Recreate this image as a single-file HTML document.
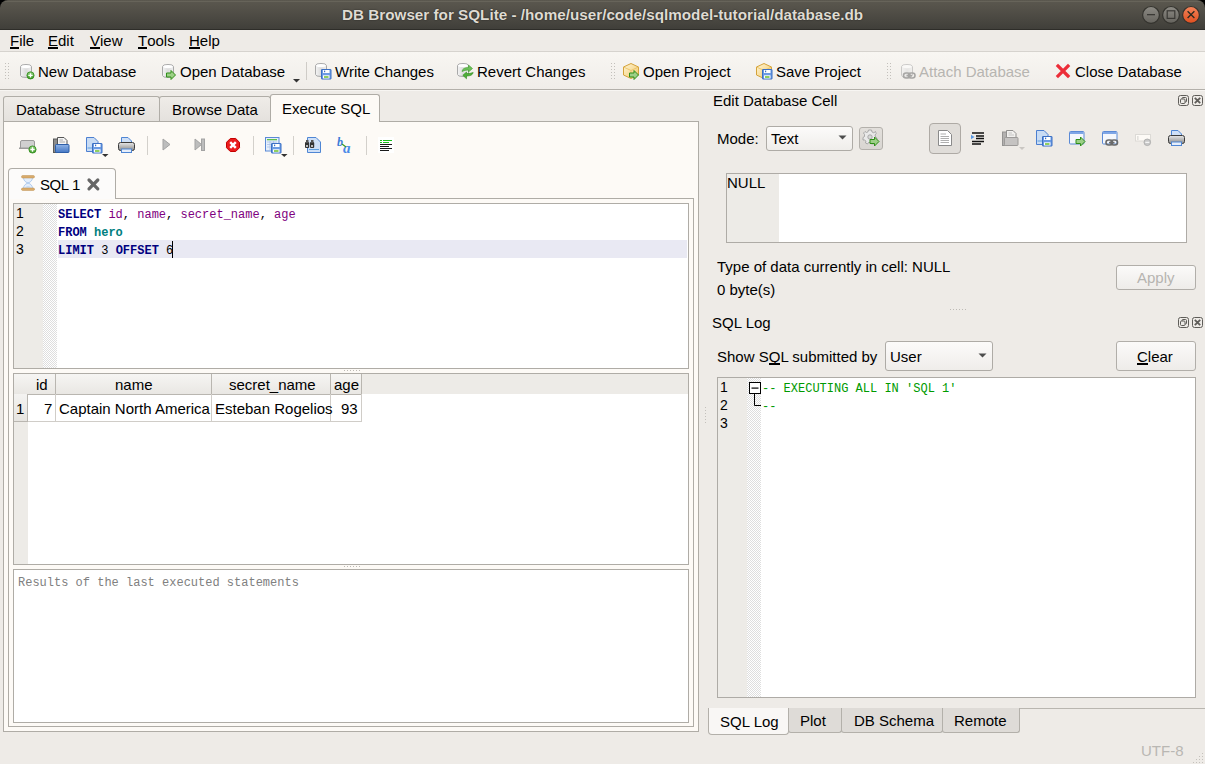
<!DOCTYPE html>
<html><head><meta charset="utf-8"><style>
*{margin:0;padding:0;box-sizing:border-box}
html,body{width:1205px;height:764px;overflow:hidden;background:#eeebe7;font-family:"Liberation Sans",sans-serif;font-size:15px;color:#000}
.a{position:absolute}
.t{position:absolute;white-space:nowrap;line-height:17px}
.m{position:absolute;white-space:nowrap;font-family:"Liberation Mono",monospace;font-size:12px;line-height:18px}
.ln{position:absolute;white-space:nowrap;font-size:14px;line-height:18px}
svg{position:absolute;overflow:visible}
u{text-decoration:none;position:relative}
u:after{content:"";position:absolute;left:0;right:0;bottom:0px;height:2px;background:currentColor}
.grip{position:absolute;background-image:linear-gradient(#c6c3be,#c6c3be);background-size:1px 1px}
</style></head><body>
<svg width="0" height="0" style="position:absolute">
<defs>
 <linearGradient id="gCyl" x1="0" x2="1" y1="0" y2="0">
  <stop offset="0" stop-color="#f4f4f4"/><stop offset="0.5" stop-color="#dcdcdc"/><stop offset="1" stop-color="#efefef"/>
 </linearGradient>
 <linearGradient id="gGreen" x1="0" x2="0" y1="0" y2="1">
  <stop offset="0" stop-color="#8fd07a"/><stop offset="1" stop-color="#3a9a22"/>
 </linearGradient>
 <linearGradient id="gBlue" x1="0" x2="0" y1="0" y2="1">
  <stop offset="0" stop-color="#8fb3e6"/><stop offset="1" stop-color="#4577c4"/>
 </linearGradient>
 <linearGradient id="gBox" x1="0" x2="1" y1="0" y2="1">
  <stop offset="0" stop-color="#fff6d6"/><stop offset="1" stop-color="#f2c666"/>
 </linearGradient>
 <linearGradient id="gPrint" x1="0" x2="0" y1="0" y2="1">
  <stop offset="0" stop-color="#e8e8e8"/><stop offset="1" stop-color="#8a8a8a"/>
 </linearGradient>
 <g id="cyl">
  <path d="M0.5,2.5 Q0.5,0.5 6,0.5 Q11.5,0.5 11.5,2.5 L11.5,11.5 Q11.5,13.5 6,13.5 Q0.5,13.5 0.5,11.5 Z" fill="url(#gCyl)" stroke="#a9a9a9"/>
  <ellipse cx="6" cy="2.6" rx="4.6" ry="1.6" fill="#fff"/>
 </g>
 <g id="floppy">
  <rect x="0.5" y="0.5" width="9.5" height="9.5" rx="0.3" fill="#6b9be4" stroke="#3b6fc4"/>
  <rect x="2" y="1" width="6.5" height="3" fill="#fff"/>
  <rect x="3" y="1.6" width="1.2" height="1.6" fill="#3b6fc4"/>
  <rect x="2" y="6.3" width="6.5" height="3.2" fill="#fff"/>
  <rect x="3" y="7.2" width="4.5" height="1.6" fill="#76c43a"/>
 </g>
 <g id="arrowG">
  <path d="M0.5,3 L5,3 L5,0.5 L9.5,5 L5,9.5 L5,7 L0.5,7 Z" fill="#9ccf86" stroke="#2f8f17" stroke-width="1"/>
 </g>
 <g id="box">
  <path d="M8,0.5 L15.5,4 L15.5,12 L8,15.5 L0.5,12 L0.5,4 Z" fill="url(#gBox)" stroke="#d4a23a"/>
  <path d="M0.5,4 L8,7.5 L15.5,4 M8,7.5 L8,15.5" fill="none" stroke="#e8bf60" stroke-width="0.8"/>
 </g>
 <g id="chain">
  <rect x="0.5" y="1" width="6.5" height="5" rx="2.5" fill="none" stroke="#6a6a6a" stroke-width="1.6"/>
  <rect x="5.5" y="1" width="6.5" height="5" rx="2.5" fill="none" stroke="#6a6a6a" stroke-width="1.6"/>
  <rect x="3.5" y="2.8" width="5.5" height="1.6" fill="#6a6a6a"/>
 </g>
</defs>
</svg>
<div class="a" style="left:0;top:0;width:1205px;height:10px;background:#000"></div>
<div class="a" style="left:0;top:0;width:1205px;height:30px;background:linear-gradient(#5b584f 0,#55524a 25%,#3f3e39 100%);border-radius:8px 8px 0 0;box-shadow:inset 0 -1px 0 #2e2d29"></div>
<div class="a" style="left:5px;top:1px;width:1195px;height:1px;background:#67645a"></div>
<span class="t" style="left:342px;top:6px;color:#dfdbd2;font-weight:bold;font-size:15.25px;text-shadow:0 0 1.5px rgba(0,0,0,.7)">DB Browser for SQLite - /home/user/code/sqlmodel-tutorial/database.db</span>
<svg width="0" height="0" style="position:absolute"><defs>
<linearGradient id="wbG" x1="0" x2="0" y1="0" y2="1"><stop offset="0" stop-color="#8c8a84"/><stop offset="1" stop-color="#65635d"/></linearGradient>
<linearGradient id="wbR" x1="0" x2="0" y1="0" y2="1"><stop offset="0" stop-color="#f5845a"/><stop offset="1" stop-color="#df4f1f"/></linearGradient>
</defs></svg>
<svg style="left:1141px;top:4px" width="20" height="21" viewBox="0 0 20 21"><circle cx="10" cy="10.9" r="8.4" fill="url(#wbG)" stroke="#34332e" stroke-width="1.2"/><rect x="6" y="10" width="8" height="1.3" fill="#3a3935"/></svg>
<svg style="left:1161px;top:4px" width="20" height="21" viewBox="0 0 20 21"><circle cx="10" cy="10.9" r="8.4" fill="url(#wbG)" stroke="#34332e" stroke-width="1.2"/><rect x="6.2" y="6.8" width="7.6" height="7.6" fill="none" stroke="#3a3935" stroke-width="1.2"/></svg>
<svg style="left:1181px;top:4px" width="20" height="21" viewBox="0 0 20 21"><circle cx="10" cy="10.9" r="8.4" fill="url(#wbR)" stroke="#34332e" stroke-width="1.2"/><path d="M6.6,7.2 L13.4,14 M13.4,7.2 L6.6,14" stroke="#2a2a20" stroke-width="1.3"/></svg>
<div class="a" style="left:0;top:30px;width:1205px;height:22px;background:#eeebe7;border-bottom:1px solid #d6d3ce"></div>
<span class="t" style="left:10px;top:32px;"><u>F</u>ile</span>
<span class="t" style="left:48px;top:32px;"><u>E</u>dit</span>
<span class="t" style="left:90px;top:32px;"><u>V</u>iew</span>
<span class="t" style="left:138px;top:32px;"><u>T</u>ools</span>
<span class="t" style="left:189px;top:32px;"><u>H</u>elp</span>
<div class="a" style="left:0;top:52px;width:1205px;height:38px;background:linear-gradient(#f8f6f2,#f0ede9);border-bottom:1px solid #b3b0aa"></div>
<div class="a" style="left:0;top:90px;width:1205px;height:1px;background:#f7f5f2"></div>
<svg style="left:5px;top:63px" width="6" height="16"><g fill="#c3c0bb"><rect x="0" y="0" width="1" height="1"/><rect x="0" y="3" width="1" height="1"/><rect x="0" y="6" width="1" height="1"/><rect x="0" y="9" width="1" height="1"/><rect x="0" y="12" width="1" height="1"/><rect x="0" y="15" width="1" height="1"/><rect x="3" y="0" width="1" height="1"/><rect x="3" y="3" width="1" height="1"/><rect x="3" y="6" width="1" height="1"/><rect x="3" y="9" width="1" height="1"/><rect x="3" y="12" width="1" height="1"/><rect x="3" y="15" width="1" height="1"/></g></svg>
<svg style="left:611px;top:63px" width="6" height="16"><g fill="#c3c0bb"><rect x="0" y="0" width="1" height="1"/><rect x="0" y="3" width="1" height="1"/><rect x="0" y="6" width="1" height="1"/><rect x="0" y="9" width="1" height="1"/><rect x="0" y="12" width="1" height="1"/><rect x="0" y="15" width="1" height="1"/><rect x="3" y="0" width="1" height="1"/><rect x="3" y="3" width="1" height="1"/><rect x="3" y="6" width="1" height="1"/><rect x="3" y="9" width="1" height="1"/><rect x="3" y="12" width="1" height="1"/><rect x="3" y="15" width="1" height="1"/></g></svg>
<svg style="left:887px;top:63px" width="6" height="16"><g fill="#c3c0bb"><rect x="0" y="0" width="1" height="1"/><rect x="0" y="3" width="1" height="1"/><rect x="0" y="6" width="1" height="1"/><rect x="0" y="9" width="1" height="1"/><rect x="0" y="12" width="1" height="1"/><rect x="0" y="15" width="1" height="1"/><rect x="3" y="0" width="1" height="1"/><rect x="3" y="3" width="1" height="1"/><rect x="3" y="6" width="1" height="1"/><rect x="3" y="9" width="1" height="1"/><rect x="3" y="12" width="1" height="1"/><rect x="3" y="15" width="1" height="1"/></g></svg>
<svg style="left:293px;top:79px" width="8" height="4"><path d="M0,0 L7,0 L3.5,3.5 Z" fill="#333"/></svg>
<div class="a" style="left:306px;top:62px;width:1px;height:18px;background:#cfccc7"></div>
<span class="t" style="left:38px;top:63px;">New Database</span>
<span class="t" style="left:180px;top:63px;">Open Database</span>
<span class="t" style="left:335px;top:63px;">Write Changes</span>
<span class="t" style="left:477px;top:63px;">Revert Changes</span>
<span class="t" style="left:643px;top:63px;">Open Project</span>
<span class="t" style="left:776px;top:63px;">Save Project</span>
<span class="t" style="left:919px;top:63px;color:#b7b5b1">Attach Database</span>
<span class="t" style="left:1075px;top:63px;">Close Database</span>
<svg style="left:20px;top:64px" width="16" height="16" viewBox="0 0 16 16"><use href="#cyl"/><circle cx="10.5" cy="11.4" r="3.6" fill="url(#gGreen)" stroke="#2e8a1a" stroke-width="0.8"/><path d="M10.5,9.2 V13.6 M8.3,11.4 H12.7" stroke="#fff" stroke-width="1.4"/></svg>
<svg style="left:162px;top:64px" width="16" height="16" viewBox="0 0 16 16"><use href="#cyl"/><use href="#arrowG" x="4" y="6"/></svg>
<svg style="left:315px;top:63px" width="18" height="18" viewBox="0 0 18 18"><use href="#cyl"/><use href="#floppy" x="6" y="6"/></svg>
<svg style="left:457px;top:63px" width="18" height="18" viewBox="0 0 18 18"><use href="#cyl"/><path d="M5,8.5 Q5.5,4.5 11.5,4.5 L11.5,2 L15.5,5.5 L11.5,9 L11.5,7 Q7.5,7 5,8.5 Z" fill="#6cc05a" stroke="#3f9c2c" stroke-width="0.6"/><path d="M16.2,9.5 Q15.5,13 9.5,13 L9.5,15.8 L5.8,12.3 L9.5,9 L9.5,10.6 Q13.5,10.6 16.2,9.5 Z" fill="#4fae3a" stroke="#2f8c1c" stroke-width="0.6"/></svg>
<svg style="left:623px;top:63px" width="17" height="17" viewBox="0 0 17 17"><use href="#box"/><use href="#arrowG" x="6" y="7"/></svg>
<svg style="left:756px;top:63px" width="17" height="17" viewBox="0 0 17 17"><use href="#box"/><use href="#floppy" x="6" y="6"/></svg>
<svg style="left:901px;top:64px" width="16" height="16" viewBox="0 0 16 16"><g opacity="0.55"><use href="#cyl"/><use href="#chain" x="2" y="8"/></g></svg>
<svg style="left:1056px;top:64px" width="14" height="14" viewBox="0 0 14 14"><path d="M2,2 L12,12 M12,2 L2,12" stroke="#ec2d38" stroke-width="3.2" stroke-linecap="square"/></svg>
<div class="a" style="left:3px;top:96px;width:157px;height:26px;border:1px solid #b0ada7;border-bottom:none;border-radius:3px 3px 0 0;background:linear-gradient(#efece8,#e4e1dd)"></div>
<div class="a" style="left:159px;top:96px;width:112px;height:26px;border:1px solid #b0ada7;border-bottom:none;border-radius:3px 3px 0 0;background:linear-gradient(#efece8,#e4e1dd)"></div>
<span class="t" style="left:16px;top:101px;">Database Structure</span>
<span class="t" style="left:172px;top:101px;">Browse Data</span>
<div class="a" style="left:3px;top:121px;width:696px;height:611px;border:1px solid #afaca6;background:#fdfaf6"></div>
<div class="a" style="left:270px;top:94px;width:110px;height:28px;border:1px solid #afaca6;border-bottom:none;border-radius:3px 3px 0 0;background:#fdfaf6"></div>
<span class="t" style="left:282px;top:100px;">Execute SQL</span>
<div class="a" style="left:147px;top:136px;width:1px;height:19px;background:#d3d0cb"></div>
<div class="a" style="left:253px;top:136px;width:1px;height:19px;background:#d3d0cb"></div>
<div class="a" style="left:293px;top:136px;width:1px;height:19px;background:#d3d0cb"></div>
<div class="a" style="left:366px;top:136px;width:1px;height:19px;background:#d3d0cb"></div>
<svg style="left:19px;top:139px" width="18" height="16" viewBox="0 0 18 16"><path d="M1.5,9.5 L1.5,3 Q1.5,1.5 3,1.5 L14,1.5 Q15.5,1.5 15.5,3 L15.5,9.5 Z" fill="#d0d0d0" stroke="#9a9a9a"/><rect x="0" y="8.5" width="16" height="1.5" fill="#9a9a9a"/><circle cx="13.5" cy="10.5" r="3.6" fill="url(#gGreen)" stroke="#2e8a1a" stroke-width="0.8"/><path d="M13.5,8.3 V12.7 M11.3,10.5 H15.7" stroke="#fff" stroke-width="1.4"/></svg>
<svg style="left:53px;top:137px" width="17" height="16" viewBox="0 0 17 16"><rect x="0.5" y="2" width="4" height="13.5" fill="#8c8c8c" stroke="#5a5a5a"/><path d="M4.5,0.5 L11,0.5 L14,3.5 L14,9 L4.5,9 Z" fill="#f4f4f4" stroke="#555"/><path d="M6.5,3 H10 M6.5,5 H12" stroke="#999" stroke-width="0.8"/><rect x="2.5" y="7.5" width="13.5" height="8" rx="0.8" fill="url(#gBlue)" stroke="#2d5ea8"/></svg>
<svg style="left:86px;top:137px" width="23" height="21" viewBox="0 0 23 21"><path d="M0.5,0.5 L8,0.5 L12,4.5 L12,14.5 L0.5,14.5 Z" fill="#c9dcf4" stroke="#4c7fd0"/><rect x="1.5" y="10.5" width="5" height="1" fill="#5fa0e0"/><use href="#floppy" x="6" y="6"/><path d="M16,17 L22.5,17 L19.25,20 Z" fill="#333"/></svg>
<svg style="left:118px;top:137px" width="18" height="17" viewBox="0 0 18 17"><path d="M3.5,0.5 L10,0.5 L13.5,4 L13.5,7 L3.5,7 Z" fill="#cfe0f7" stroke="#4f86d4"/><rect x="0.5" y="5.5" width="16" height="8" rx="2" fill="url(#gPrint)" stroke="#3b3b3b"/><rect x="3.5" y="12" width="10" height="3.5" fill="#e6eefb" stroke="#4f86d4"/></svg>
<svg style="left:162px;top:138px" width="10" height="14" viewBox="0 0 10 14"><path d="M1,1 L8,6.5 L1,12 Z" fill="#bdbdbd" stroke="#a3a3a3"/></svg>
<svg style="left:194px;top:138px" width="12" height="14" viewBox="0 0 12 14"><path d="M1,1 L7.5,6.5 L1,12 Z" fill="#bdbdbd" stroke="#a3a3a3"/><rect x="7.5" y="1" width="3" height="11.5" fill="#bdbdbd" stroke="#a3a3a3"/></svg>
<svg style="left:226px;top:138px" width="15" height="15" viewBox="0 0 15 15"><path d="M4.3,0.5 L9.7,0.5 L13.5,4.3 L13.5,9.7 L9.7,13.5 L4.3,13.5 L0.5,9.7 L0.5,4.3 Z" fill="#ea1c1c" stroke="#c40000"/><path d="M4.2,4.2 L9.8,9.8 M9.8,4.2 L4.2,9.8" stroke="#fff" stroke-width="2.4"/></svg>
<svg style="left:265px;top:137px" width="23" height="21" viewBox="0 0 23 21"><rect x="0.5" y="0.5" width="13.5" height="13.5" fill="#e6effb" stroke="#5b8ad6"/><rect x="2" y="2" width="10" height="1.3" fill="#5fbf4a"/><path d="M2,5 H12 M2,7.5 H12 M2,10 H12 M5,4 V13 M8.5,4 V13" stroke="#a9c2ea" stroke-width="0.8"/><use href="#floppy" x="6" y="6"/><path d="M16,17 L22.5,17 L19.25,20 Z" fill="#333"/></svg>
<svg style="left:305px;top:137px" width="17" height="17" viewBox="0 0 17 17"><path d="M2.5,0.5 L11,0.5 L15.5,5 L15.5,15.5 L2.5,15.5 Z" fill="#cfe0f7" stroke="#4f86d4"/><rect x="4" y="12" width="10" height="1" fill="#5fa0e0"/><rect x="0" y="5" width="4.2" height="6" rx="1" fill="#333"/><rect x="5" y="5" width="4.2" height="6" rx="1" fill="#333"/><rect x="1" y="3" width="2.5" height="3" fill="#555"/><rect x="6" y="3" width="2.5" height="3" fill="#555"/><rect x="1" y="8" width="2" height="2" fill="#bbb"/><rect x="6" y="8" width="2" height="2" fill="#bbb"/></svg>
<svg style="left:337px;top:137px" width="18" height="17" viewBox="0 0 18 17"><text x="0" y="9" font-family="Liberation Serif" font-style="italic" font-weight="bold" font-size="12" fill="#3b7ad8">b</text><text x="6" y="15.5" font-family="Liberation Serif" font-style="italic" font-weight="bold" font-size="15" fill="#4a8ae8">a</text><path d="M5,7 L9,10" stroke="#3a9a22" stroke-width="1.2"/></svg>
<svg style="left:378px;top:137px" width="16" height="16" viewBox="0 0 16 16"><rect x="0" y="0" width="16" height="16" fill="#fff"/><path d="M2,3.5 H4 M5,3.5 H14 M2,5.5 H4 M5,5.5 H11" stroke="#1cc01c" stroke-width="1.2"/><path d="M2,7.5 H14 M2,9.5 H11 M2,11.5 H14 M2,13.5 H11" stroke="#1a1a1a" stroke-width="1.2"/></svg>
<div class="a" style="left:8px;top:198px;width:686px;height:529px;border:1px solid #afaca6;background:#fdfaf6"></div>
<div class="a" style="left:8px;top:168px;width:108px;height:31px;border:1px solid #afaca6;border-bottom:none;border-radius:4px 4px 0 0;background:#fcfbfa"></div>
<svg style="left:21px;top:175px" width="15" height="16" viewBox="0 0 15 16"><path d="M2.5,2.5 Q2.5,6.5 7,8 Q11.5,6.5 11.5,2.5 Z M2.5,13.5 Q2.5,9.5 7,8 Q11.5,9.5 11.5,13.5 Z" fill="#e4eefb" stroke="#9ec0ea" stroke-width="0.8"/><path d="M4,12.5 Q7,10 10,12.5 Z" fill="#bcd5f3"/><rect x="0.5" y="0.6" width="13" height="2.4" rx="1.2" fill="#dcae6e" stroke="#b98a48" stroke-width="0.5"/><rect x="0.5" y="13" width="13" height="2.4" rx="1.2" fill="#dcae6e" stroke="#b98a48" stroke-width="0.5"/></svg>
<span class="t" style="left:40px;top:176px;letter-spacing:-0.4px">SQL 1</span>
<svg style="left:87px;top:178px" width="13" height="13" viewBox="0 0 13 13"><path d="M2,2 L10.8,10.8 M10.8,2 L2,10.8" stroke="#666" stroke-width="3.2" stroke-linecap="round"/></svg>
<div class="a" style="left:13px;top:203px;width:676px;height:166px;border:1px solid #afaca6;background:#fff;overflow:hidden"><div class="a" style="left:0;top:0;width:29px;height:164px;background:#edebe7"></div><div class="a" style="left:29px;top:0;width:14px;height:164px;background-color:#eeeeee;background-image:repeating-conic-gradient(#dedede 0 25%,#ffffff 0 50%);background-size:2px 2px"></div><div class="a" style="left:44px;top:36px;width:629px;height:18px;background:#e9e9f3"></div></div>
<span class="ln" style="left:16px;top:204px">1</span>
<span class="ln" style="left:16px;top:222px">2</span>
<span class="ln" style="left:16px;top:240px">3</span>
<span class="m" style="left:58px;top:206px"><span style="color:#000080;font-weight:bold">SELECT</span> <span style="color:#800080">id</span>, <span style="color:#800080">name</span>, <span style="color:#800080">secret_name</span>, <span style="color:#800080">age</span></span>
<span class="m" style="left:58px;top:224px"><span style="color:#000080;font-weight:bold">FROM</span> <span style="color:#008080;font-weight:bold">hero</span></span>
<span class="m" style="left:58px;top:242px"><span style="color:#000080;font-weight:bold">LIMIT</span> 3 <span style="color:#000080;font-weight:bold">OFFSET</span> 6</span>
<div class="a" style="left:172px;top:241px;width:1px;height:17px;background:#000"></div>
<svg style="left:344px;top:370px" width="18" height="1"><g fill="#bdbab5"><rect x="0" y="0" width="1" height="1"/><rect x="3" y="0" width="1" height="1"/><rect x="6" y="0" width="1" height="1"/><rect x="9" y="0" width="1" height="1"/><rect x="12" y="0" width="1" height="1"/><rect x="15" y="0" width="1" height="1"/></g></svg>
<svg style="left:344px;top:566px" width="18" height="1"><g fill="#bdbab5"><rect x="0" y="0" width="1" height="1"/><rect x="3" y="0" width="1" height="1"/><rect x="6" y="0" width="1" height="1"/><rect x="9" y="0" width="1" height="1"/><rect x="12" y="0" width="1" height="1"/><rect x="15" y="0" width="1" height="1"/></g></svg>
<div class="a" style="left:13px;top:373px;width:676px;height:192px;border:1px solid #afaca6;background:#fff;overflow:hidden"><div class="a" style="left:0;top:0;width:674px;height:20px;background:#edebe7"></div><div class="a" style="left:0;top:20px;width:14px;height:170px;background:#edebe7"></div></div>
<div class="a" style="left:28px;top:374px;width:28px;height:21px;background:linear-gradient(#f6f5f3,#e9e7e3);border-right:1px solid #b9b6b0;border-bottom:1px solid #b9b6b0"></div>
<div class="a" style="left:56px;top:374px;width:156px;height:21px;background:linear-gradient(#f6f5f3,#e9e7e3);border-right:1px solid #b9b6b0;border-bottom:1px solid #b9b6b0"></div>
<div class="a" style="left:212px;top:374px;width:119px;height:21px;background:linear-gradient(#f6f5f3,#e9e7e3);border-right:1px solid #b9b6b0;border-bottom:1px solid #b9b6b0"></div>
<div class="a" style="left:331px;top:374px;width:31px;height:21px;background:linear-gradient(#f6f5f3,#e9e7e3);border-right:1px solid #b9b6b0;border-bottom:1px solid #b9b6b0"></div>
<div class="a" style="left:14px;top:374px;width:15px;height:21px;background:linear-gradient(#f6f5f3,#e9e7e3);border-bottom:1px solid #b9b6b0"></div>
<div class="a" style="left:14px;top:394px;width:14px;height:28px;background:linear-gradient(#f4f3f1,#e6e4e0);border-right:1px solid #b9b6b0;border-bottom:1px solid #b9b6b0"></div>
<div class="a" style="left:28px;top:394px;width:334px;height:28px;border-right:1px solid #d0cdc8;border-bottom:1px solid #d0cdc8"></div>
<div class="a" style="left:55px;top:394px;width:1px;height:27px;background:#d0cdc8"></div>
<div class="a" style="left:211px;top:394px;width:1px;height:27px;background:#d0cdc8"></div>
<div class="a" style="left:330px;top:394px;width:1px;height:27px;background:#d0cdc8"></div>
<span class="t" style="left:36px;top:376px;">id</span>
<span class="t" style="left:115px;top:376px;">name</span>
<span class="t" style="left:229px;top:376px;">secret_name</span>
<span class="t" style="left:334px;top:376px;">age</span>
<span class="t" style="left:16px;top:400px;">1</span>
<span class="t" style="left:44px;top:400px;">7</span>
<span class="t" style="left:59px;top:400px;">Captain North America</span>
<span class="t" style="left:215px;top:400px;">Esteban Rogelios</span>
<span class="t" style="left:341px;top:400px;">93</span>
<div class="a" style="left:13px;top:569px;width:676px;height:154px;border:1px solid #afaca6;background:#fff"></div>
<span class="m" style="left:18px;top:574px;color:#808080">Results of the last executed statements</span>
<span class="t" style="left:713px;top:92px;">Edit Database Cell</span>
<svg style="left:1178px;top:95px" width="11" height="11" viewBox="0 0 11 11"><rect x="0.5" y="0.5" width="10" height="10" rx="2" fill="none" stroke="#5f5d59"/><rect x="4" y="2.5" width="4.5" height="4.5" rx="1" fill="none" stroke="#5f5d59"/><rect x="2.5" y="4" width="4.5" height="4.5" rx="1" fill="#edebe7" stroke="#5f5d59"/></svg>
<svg style="left:1192px;top:95px" width="11" height="11" viewBox="0 0 11 11"><rect x="0.5" y="0.5" width="10" height="10" rx="2" fill="none" stroke="#5f5d59"/><path d="M2.8,2.8 L8.2,8.2 M8.2,2.8 L2.8,8.2" stroke="#5f5d59" stroke-width="1.8"/></svg>
<span class="t" style="left:717px;top:130px;">Mode:</span>
<div class="a" style="left:766px;top:126px;width:87px;height:25px;border:1px solid #aeaba6;border-radius:3px;background:linear-gradient(#fcfbfa,#efedea)"></div>
<svg style="left:838px;top:135px" width="9" height="5" viewBox="0 0 9 5"><path d="M0.5,0.5 L8.5,0.5 L4.5,4.5 Z" fill="#4d4d4d"/></svg>
<span class="t" style="left:771px;top:130px;">Text</span>
<div class="a" style="left:859px;top:127px;width:24px;height:23px;border:1px solid #b3b0ab;border-radius:3px;background:linear-gradient(#e2dfdb,#d9d6d2)"></div>
<svg style="left:863px;top:130px" width="17" height="17" viewBox="0 0 17 17"><g transform="translate(7,7)"><path d="M-1.5,-7 L1.5,-7 L2,-5 L3.8,-4.2 L5.5,-5.5 L6.2,-3.5 L5,-2 L5.5,0 L7,1 L6.5,3 L4.8,3.2 L3.5,5 L4,6.8 L1.5,7 L0.5,5.5 L-1.5,5.5 L-2.5,7 L-4.5,6 L-4,4.2 L-5.5,3 L-7,3 L-7,0.5 L-5.5,-0.5 L-5.5,-2.5 L-6.5,-4 L-5,-5.5 L-3.5,-4.5 L-2,-5.2 Z" fill="#e9e9e9" stroke="#9a9a9a" stroke-width="0.8"/><circle cx="0" cy="0" r="2.2" fill="#d8d8d8" stroke="#9a9a9a" stroke-width="0.8"/></g><use href="#arrowG" x="6.5" y="6.5"/></svg>
<div class="a" style="left:929px;top:123px;width:32px;height:31px;border:1px solid #aeaaa5;border-radius:4px;background:#e0ddd9"></div>
<svg style="left:938px;top:130px" width="14" height="16" viewBox="0 0 14 16"><path d="M0.5,0.5 L9.5,0.5 L13.5,4.5 L13.5,15.5 L0.5,15.5 Z" fill="#fff" stroke="#8a8a8a"/><path d="M2.5,4 H8 M2.5,6.5 H11 M2.5,8.5 H11 M2.5,10.5 H11 M2.5,12.5 H11" stroke="#9a9a9a" stroke-width="0.8"/></svg>
<svg style="left:971px;top:132px" width="14" height="13" viewBox="0 0 14 13"><path d="M1,1 H13 M5,4 H13 M5,6.5 H13 M1,9.5 H13 M1,12 H10" stroke="#111" stroke-width="1.3"/><path d="M0,2.8 L3.5,5 L0,7.2 Z" fill="#5a9ae6"/></svg>
<svg style="left:1002px;top:130px" width="24" height="21" viewBox="0 0 24 21"><g opacity="0.6"><rect x="0.5" y="2" width="4" height="13.5" fill="#8c8c8c" stroke="#5a5a5a"/><path d="M4.5,0.5 L11,0.5 L14,3.5 L14,9 L4.5,9 Z" fill="#f4f4f4" stroke="#555"/><path d="M6.5,3 H10 M6.5,5 H12" stroke="#999" stroke-width="0.8"/><rect x="2.5" y="7.5" width="13.5" height="8" rx="0.8" fill="#aaa" stroke="#666"/></g><path d="M17,17 L23,17 L20,20 Z" fill="#c9c6c2"/></svg>
<svg style="left:1036px;top:130px" width="17" height="16" viewBox="0 0 17 16"><path d="M0.5,0.5 L8,0.5 L12,4.5 L12,14.5 L0.5,14.5 Z" fill="#c9dcf4" stroke="#4c7fd0"/><rect x="1.5" y="10.5" width="5" height="1" fill="#5fa0e0"/><use href="#floppy" x="6" y="6"/></svg>
<svg style="left:1069px;top:131px" width="17" height="15" viewBox="0 0 17 15"><rect x="0.5" y="0.5" width="14.5" height="12.5" rx="1" fill="#f4f7fc" stroke="#5b8ad6"/><rect x="1" y="1" width="13.5" height="2" fill="#7fa6e6"/><use href="#arrowG" x="6.5" y="5.5"/></svg>
<svg style="left:1102px;top:131px" width="17" height="15" viewBox="0 0 17 15"><rect x="0.5" y="0.5" width="14.5" height="12.5" rx="1" fill="#f4f7fc" stroke="#5b8ad6"/><rect x="1" y="1" width="13.5" height="2" fill="#7fa6e6"/><use href="#chain" x="3.5" y="8"/></svg>
<svg style="left:1135px;top:134px" width="17" height="12" viewBox="0 0 17 12"><rect x="0.5" y="0.5" width="15" height="6.5" fill="#fdfaf6" stroke="#dcdad6"/><rect x="2.5" y="2" width="0.8" height="4" fill="#c8c6c2"/><circle cx="12.3" cy="8.3" r="3.3" fill="#c8c8c8" stroke="#a8a8a8" stroke-width="0.8"/><rect x="10.3" y="7.8" width="4" height="1" fill="#fff"/></svg>
<svg style="left:1168px;top:130px" width="17" height="17" viewBox="0 0 17 17"><path d="M3.5,0.5 L10,0.5 L13.5,4 L13.5,7 L3.5,7 Z" fill="#cfe0f7" stroke="#4f86d4"/><rect x="0.5" y="5.5" width="16" height="8" rx="2" fill="url(#gPrint)" stroke="#3b3b3b"/><rect x="3.5" y="12" width="10" height="3.5" fill="#e6eefb" stroke="#4f86d4"/></svg>
<div class="a" style="left:726px;top:173px;width:461px;height:70px;border:1px solid #aeaba6;background:#fff;overflow:hidden"><div class="a" style="left:0;top:0;width:52px;height:68px;background:#edebe7"></div></div>
<span class="t" style="left:727px;top:174px;">NULL</span>
<span class="t" style="left:717px;top:258px;">Type of data currently in cell: NULL</span>
<span class="t" style="left:717px;top:281px;">0 byte(s)</span>
<div class="a" style="left:1116px;top:265px;width:80px;height:25px;border:1px solid #b1aea9;border-radius:3px;background:linear-gradient(#fbfaf9,#eeece9)"></div>
<span class="t" style="left:1137px;top:269px;color:#b6b4b0">Apply</span>
<svg style="left:950px;top:309px" width="18" height="1"><g fill="#bdbab5"><rect x="0" y="0" width="1" height="1"/><rect x="3" y="0" width="1" height="1"/><rect x="6" y="0" width="1" height="1"/><rect x="9" y="0" width="1" height="1"/><rect x="12" y="0" width="1" height="1"/><rect x="15" y="0" width="1" height="1"/></g></svg>
<span class="t" style="left:712px;top:314px;">SQL Log</span>
<svg style="left:1178px;top:317px" width="11" height="11" viewBox="0 0 11 11"><rect x="0.5" y="0.5" width="10" height="10" rx="2" fill="none" stroke="#5f5d59"/><rect x="4" y="2.5" width="4.5" height="4.5" rx="1" fill="none" stroke="#5f5d59"/><rect x="2.5" y="4" width="4.5" height="4.5" rx="1" fill="#edebe7" stroke="#5f5d59"/></svg>
<svg style="left:1192px;top:317px" width="11" height="11" viewBox="0 0 11 11"><rect x="0.5" y="0.5" width="10" height="10" rx="2" fill="none" stroke="#5f5d59"/><path d="M2.8,2.8 L8.2,8.2 M8.2,2.8 L2.8,8.2" stroke="#5f5d59" stroke-width="1.8"/></svg>
<span class="t" style="left:717px;top:348px;">Show S<u>Q</u>L submitted by</span>
<div class="a" style="left:885px;top:341px;width:108px;height:30px;border:1px solid #aeaba6;border-radius:3px;background:linear-gradient(#fcfbfa,#efedea)"></div>
<svg style="left:978px;top:353px" width="9" height="5" viewBox="0 0 9 5"><path d="M0.5,0.5 L8.5,0.5 L4.5,4.5 Z" fill="#4d4d4d"/></svg>
<span class="t" style="left:890px;top:348px;">User</span>
<div class="a" style="left:1116px;top:341px;width:80px;height:30px;border:1px solid #b1aea9;border-radius:3px;background:linear-gradient(#fbfaf9,#eeece9)"></div>
<span class="t" style="left:1137px;top:348px;"><u>C</u>lear</span>
<svg style="left:705px;top:407px" width="3" height="17"><g fill="#c3c0bb"><rect x="0" y="0" width="1" height="1"/><rect x="0" y="3" width="1" height="1"/><rect x="0" y="6" width="1" height="1"/><rect x="0" y="9" width="1" height="1"/><rect x="0" y="12" width="1" height="1"/><rect x="0" y="15" width="1" height="1"/></g></svg>
<div class="a" style="left:717px;top:377px;width:479px;height:321px;border:1px solid #aeaba6;background:#fff;overflow:hidden"><div class="a" style="left:0;top:0;width:29px;height:319px;background:#edebe7"></div><div class="a" style="left:29px;top:0;width:14px;height:319px;background-color:#eeeeee;background-image:repeating-conic-gradient(#dedede 0 25%,#ffffff 0 50%);background-size:2px 2px"></div></div>
<span class="ln" style="left:720px;top:378px">1</span>
<span class="ln" style="left:720px;top:396px">2</span>
<span class="ln" style="left:720px;top:414px">3</span>
<svg style="left:748px;top:381px" width="14" height="30" viewBox="0 0 14 30"><rect x="1.5" y="1.5" width="11" height="11" fill="#fff" stroke="#000"/><rect x="3.5" y="6.5" width="7" height="1.2" fill="#000"/><path d="M6.5,12.5 V24.5 H13" fill="none" stroke="#000"/></svg>
<span class="m" style="left:762px;top:380px;color:#009a00">-- EXECUTING ALL IN 'SQL 1'</span>
<span class="m" style="left:762px;top:398px;color:#009a00">--</span>
<div class="a" style="left:708px;top:708px;width:497px;height:1px;background:#b9b6b0"></div>
<div class="a" style="left:788px;top:708px;width:54px;height:25px;border:1px solid #b3b0aa;border-top:none;border-radius:0 0 3px 3px;background:#dedbd7"></div>
<span class="t" style="left:800px;top:712px;">Plot</span>
<div class="a" style="left:841px;top:708px;width:102px;height:25px;border:1px solid #b3b0aa;border-top:none;border-radius:0 0 3px 3px;background:#dedbd7"></div>
<span class="t" style="left:854px;top:712px;">DB Schema</span>
<div class="a" style="left:942px;top:708px;width:78px;height:25px;border:1px solid #b3b0aa;border-top:none;border-radius:0 0 3px 3px;background:#dedbd7"></div>
<span class="t" style="left:954px;top:712px;">Remote</span>
<div class="a" style="left:708px;top:708px;width:81px;height:27px;border:1px solid #b3b0aa;border-top:none;border-radius:0 0 4px 4px;background:#f9f7f5"></div>
<span class="t" style="left:720px;top:713px;">SQL Log</span>
<span class="t" style="left:1141px;top:742px;color:#b9b7b3">UTF-8</span>
<svg style="left:1192px;top:751px" width="13" height="13"><g fill="#c4c1bc"><rect x="10" y="2" width="1" height="1"/><rect x="7" y="5" width="1" height="1"/><rect x="10" y="5" width="1" height="1"/><rect x="4" y="8" width="1" height="1"/><rect x="7" y="8" width="1" height="1"/><rect x="10" y="8" width="1" height="1"/><rect x="1" y="11" width="1" height="1"/><rect x="4" y="11" width="1" height="1"/><rect x="7" y="11" width="1" height="1"/><rect x="10" y="11" width="1" height="1"/></g></svg></body></html>
